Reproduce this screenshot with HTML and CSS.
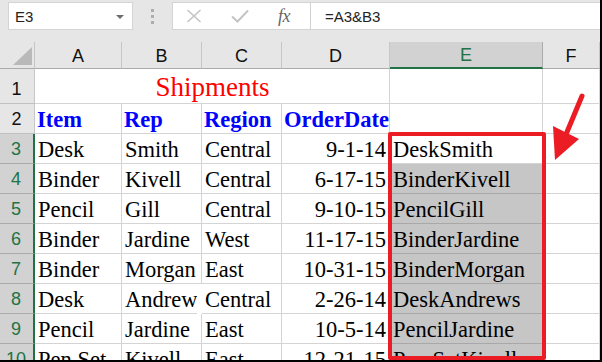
FILE: index.html
```html
<!DOCTYPE html>
<html>
<head>
<meta charset="utf-8">
<link rel="stylesheet" href="styles.css">
</head>
<body>
<div class="frame">
  <div class="toolbar">
    <div class="namebox">
      <span class="namebox-text">E3</span>
      <span class="dropdown"></span>
    </div>
    <div class="grip"><span></span><span></span><span></span></div>
    <div class="fxbox">
      <svg class="ico" width="16" height="14" viewBox="0 0 16 14"><path d="M1.5 1 L14.5 13 M14.5 1 L1.5 13" stroke="#c4c4c4" stroke-width="1.6" fill="none"/></svg>
      <svg class="ico check" width="18" height="14" viewBox="0 0 18 14"><path d="M1 7.5 L6.5 12.5 L17 1.5" stroke="#c4c4c4" stroke-width="2" fill="none"/></svg>
      <span class="fx">fx</span>
    </div>
    <div class="formula">=A3&amp;B3</div>
  </div>

  <div class="sheet">
    <div class="corner"><span class="tri"></span></div>
    <div class="ch">A</div>
    <div class="ch">B</div>
    <div class="ch">C</div>
    <div class="ch">D</div>
    <div class="ch ch-sel">E</div>
    <div class="ch">F</div>

    <div class="rh r1">1</div>
    <div class="c title">Shipments</div>
    <div class="c r1c"></div>
    <div class="c r1c"></div>

    <div class="rh">2</div>
    <div class="c hd">Item</div>
    <div class="c hd">Rep</div>
    <div class="c hd">Region</div>
    <div class="c hd">OrderDate</div>
    <div class="c"></div>
    <div class="c"></div>

    <div class="rh rh-sel">3</div>
    <div class="c">Desk</div><div class="c">Smith</div><div class="c">Central</div><div class="c num">9-1-14</div><div class="c act">DeskSmith</div><div class="c"></div>

    <div class="rh rh-sel">4</div>
    <div class="c">Binder</div><div class="c">Kivell</div><div class="c">Central</div><div class="c num">6-17-15</div><div class="c sel">BinderKivell</div><div class="c"></div>

    <div class="rh rh-sel">5</div>
    <div class="c">Pencil</div><div class="c">Gill</div><div class="c">Central</div><div class="c num">9-10-15</div><div class="c sel">PencilGill</div><div class="c"></div>

    <div class="rh rh-sel">6</div>
    <div class="c">Binder</div><div class="c">Jardine</div><div class="c">West</div><div class="c num">11-17-15</div><div class="c sel">BinderJardine</div><div class="c"></div>

    <div class="rh rh-sel">7</div>
    <div class="c">Binder</div><div class="c">Morgan</div><div class="c">East</div><div class="c num">10-31-15</div><div class="c sel">BinderMorgan</div><div class="c"></div>

    <div class="rh rh-sel">8</div>
    <div class="c">Desk</div><div class="c clip">Andrews</div><div class="c">Central</div><div class="c num">2-26-14</div><div class="c sel">DeskAndrews</div><div class="c"></div>

    <div class="rh rh-sel">9</div>
    <div class="c">Pencil</div><div class="c">Jardine</div><div class="c">East</div><div class="c num">10-5-14</div><div class="c sel">PencilJardine</div><div class="c"></div>

    <div class="rh rh-sel">10</div>
    <div class="c">Pen Set</div><div class="c">Kivell</div><div class="c">East</div><div class="c num">12-21-15</div><div class="c sel">Pen SetKivell</div><div class="c"></div>
  </div>

  <div class="redbox"></div>
  <svg class="arrow" width="40" height="75" viewBox="548 90 40 75">
    <path d="M582 96 L567 132" stroke="#ec1c24" stroke-width="5" stroke-linecap="round" fill="none"/>
    <polygon points="553,126 579,139 555,160" fill="#ec1c24"/>
  </svg>
</div>
</body>
</html>
```

FILE: styles.css
```css
html, body {
  margin: 0;
  padding: 0;
  background: #fff;
}
.frame {
  position: relative;
  width: 602px;
  height: 362px;
  box-sizing: border-box;
  border-right: 2px solid #000;
  border-bottom: 2px solid #000;
  overflow: hidden;
  background: #e6e6e6;
}
.toolbar {
  height: 42px;
  box-sizing: border-box;
  padding-top: 2px;
  display: flex;
  align-items: flex-start;
  background: #e6e6e6;
}
.namebox {
  margin-left: 8px;
  width: 125px;
  height: 28px;
  box-sizing: border-box;
  background: #fff;
  border: 1px solid #d4d4d4;
  display: flex;
  align-items: center;
  justify-content: space-between;
  padding: 0 8px 0 6px;
}
.namebox-text {
  font-family: "Liberation Sans", Arial, sans-serif;
  font-size: 15px;
  color: #222;
}
.dropdown {
  width: 0;
  height: 0;
  border-left: 4px solid transparent;
  border-right: 4px solid transparent;
  border-top: 4px solid #6e6e6e;
  margin-top: 1px;
}
.grip {
  width: 39px;
  height: 28px;
  display: flex;
  flex-direction: column;
  align-items: center;
  justify-content: center;
  gap: 3px;
}
.grip span {
  width: 3px;
  height: 3px;
  background: #adadad;
}
.fxbox {
  width: 139px;
  height: 28px;
  box-sizing: border-box;
  background: #fff;
  border: 1px solid #d4d4d4;
  border-right: 1px solid #d0d0d0;
  display: flex;
  align-items: center;
  padding-left: 13px;
}
.ico {
  display: block;
}
.check {
  margin-left: 29px;
}
.fx {
  margin-left: 29px;
  font-family: "Liberation Serif", "Times New Roman", serif;
  font-style: italic;
  font-size: 18px;
  color: #666;
  letter-spacing: -0.5px;
}
.formula {
  flex: 1;
  height: 28px;
  box-sizing: border-box;
  background: #fff;
  border-top: 1px solid #d4d4d4;
  border-bottom: 1px solid #d4d4d4;
  display: flex;
  align-items: center;
  padding-left: 14px;
  font-family: "Liberation Sans", Arial, sans-serif;
  font-size: 15px;
  color: #222;
}
.sheet {
  display: grid;
  grid-template-columns: 35px 87px 80px 80px 108px 153px 57px;
  grid-template-rows: 27px 35px repeat(9, 30px);
  background: #fff;
}
.corner {
  background: #e6e6e6;
  border-right: 1px solid #c6c6c6;
  border-bottom: 1px solid #ababab;
  box-sizing: border-box;
  position: relative;
}
.tri {
  position: absolute;
  right: 2px;
  bottom: 3px;
  width: 0;
  height: 0;
  border-left: 19px solid transparent;
  border-bottom: 18px solid #b9b9b9;
}
.ch {
  background: #e6e6e6;
  border-right: 1px solid #c6c6c6;
  border-bottom: 1px solid #ababab;
  box-sizing: border-box;
  font-family: "Liberation Sans", Arial, sans-serif;
  font-size: 18px;
  line-height: 26px;
  padding-top: 1px;
  text-align: center;
  color: #111;
}
.ch-sel {
  background: #d2d2d2;
  color: #217346;
  border-bottom: 2px solid #217346;
  border-right: 1px solid #ababab;
  line-height: 25px;
}
.rh {
  background: #e6e6e6;
  border-right: 1px solid #c6c6c6;
  border-bottom: 1px solid #c0c0c0;
  box-sizing: border-box;
  font-family: "Liberation Sans", Arial, sans-serif;
  font-size: 18px;
  line-height: 27px;
  padding-top: 2px;
  text-align: center;
  padding-right: 1px;
  color: #111;
  overflow: hidden;
}
.r1 {
  line-height: 27px;
  padding-top: 7px;
}
.rh-sel {
  background: #d2d2d2;
  color: #217346;
  border-right: 2px solid #217346;
  border-bottom: 1px solid #ababab;
}
.c {
  border-right: 1px solid #d4d4d4;
  border-bottom: 1px solid #d4d4d4;
  box-sizing: border-box;
  font-family: "Liberation Serif", "Times New Roman", serif;
  font-size: 22.5px;
  line-height: 27px;
  padding: 2px 2px 0 3px;
  white-space: nowrap;
  overflow: hidden;
  color: #000;
}
.title {
  grid-column: span 4;
  text-align: center;
  color: #ff0000;
  font-size: 27px;
  line-height: 32px;
  padding-top: 2px;
}
.r1c {
  line-height: 32px;
}
.hd {
  font-weight: bold;
  color: #0000ff;
  padding-left: 2px;
}
.num {
  text-align: right;
  padding-right: 3px;
}
.clip {
  clip-path: inset(0 5px 0 0);
}
.sel {
  background: #c6c6c6;
  border-bottom-color: #a8a8a8;
}
.redbox {
  position: absolute;
  left: 388px;
  top: 132px;
  width: 158px;
  height: 228px;
  box-sizing: border-box;
  border: 4px solid #ec1c24;
  border-radius: 2px;
}
.arrow {
  position: absolute;
  left: 548px;
  top: 90px;
}
```
